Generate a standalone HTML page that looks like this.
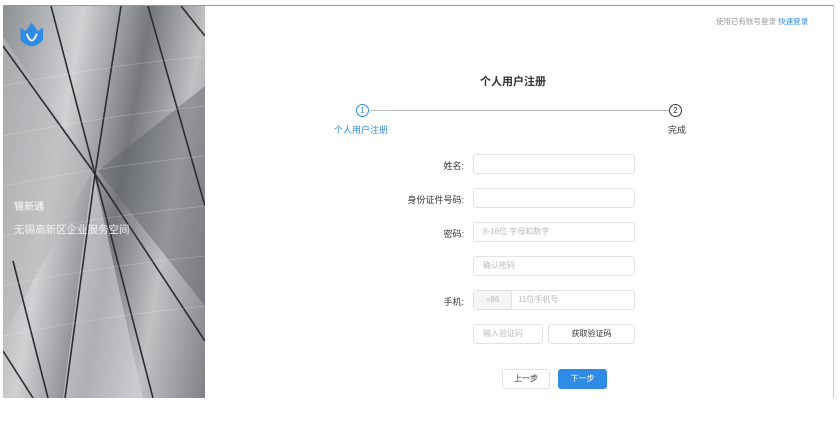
<!DOCTYPE html><html><head><meta charset="utf-8"><style>
body{margin:0;width:840px;height:438px;background:#fff;position:relative;font-family:"Liberation Sans","Noto Sans CJK SC",sans-serif;overflow:hidden}
.frame{position:absolute;left:3px;top:5px;width:831px;height:393px;border-top:1px solid #999;border-right:1px solid #ccc;box-sizing:border-box}
.left{position:absolute;left:3px;top:6px;width:202px;height:392px;overflow:hidden;background:linear-gradient(100deg,#8d9093 0%,#d0d1d3 30%,#75787b 55%,#c0c1c3 75%,#7f8285 100%)}
.abs{position:absolute}
.lbl{position:absolute;font-size:9px;color:#333;text-align:right;width:80px}
.inp{position:absolute;border:1px solid #e2e2e2;border-radius:3px;height:20px;box-sizing:border-box;font-size:8px;color:#bbb;padding-left:9px;line-height:18px;background:#fff}
</style></head><body>
<div class="frame"></div>
<div class="left">
<svg width="202" height="392" style="position:absolute;left:0;top:0">
<polygon points="0,30 90,165 0,330" fill="#b7b9bb" opacity=".6"/>
<polygon points="95,165 202,80 202,300" fill="#5e6164" opacity=".45"/>
<polygon points="90,165 60,392 140,392" fill="#d5d6d8" opacity=".6"/>
<g stroke="#2b2d30" stroke-width="1.6" fill="none">
<line x1="48" y1="0" x2="92" y2="168"/><line x1="118" y1="0" x2="92" y2="168"/>
<line x1="0" y1="40" x2="92" y2="168"/><line x1="145" y1="0" x2="202" y2="200"/>
<line x1="178" y1="0" x2="202" y2="30"/>
<line x1="92" y1="168" x2="202" y2="335"/><line x1="92" y1="168" x2="150" y2="392"/>
<line x1="92" y1="168" x2="62" y2="392"/><line x1="10" y1="255" x2="45" y2="392"/>
<line x1="0" y1="345" x2="30" y2="392"/>
</g>
<g stroke="#fff" stroke-opacity=".25" stroke-width=".8" fill="none">
<path d="M0,80 Q100,60 202,50"/><path d="M0,130 Q100,110 202,100"/><path d="M0,180 Q100,160 202,150"/><path d="M0,230 Q100,210 202,200"/><path d="M0,280 Q100,260 202,250"/><path d="M0,330 Q100,310 202,300"/>
</g>
<g transform="translate(15,14) scale(1.25)"><path d="M2,6 L6,9 L11,2 L16,9 L20,6 L20,16 Q11,26 2,16Z" fill="#2e8be6"/><path d="M7,11 Q11,22 15,11" stroke="#fff" stroke-width="1.5" fill="none"/></g>
</svg>
<div class="abs" style="left:11px;top:192px;color:#fff;font-size:10px">锡新通</div>
<div class="abs" style="left:11px;top:216px;color:#f2f2f2;font-size:10.5px">无锡高新区企业服务空间</div>
</div>
<div class="abs" style="left:716px;top:16px;font-size:7.5px;color:#999">使用已有账号登录 <span style="color:#2e8be6">快速登录</span></div>
<div class="abs" style="left:480px;top:73px;font-size:11px;color:#333;font-weight:bold">个人用户注册</div>
<div class="abs" style="left:356px;top:104px;width:13px;height:13px;border:1.3px solid #2e8be6;border-radius:50%;box-sizing:border-box;font-size:8px;color:#2e8be6;text-align:center;line-height:11px">1</div>
<div class="abs" style="left:370px;top:110px;width:299px;height:1px;background:#bbb"></div>
<div class="abs" style="left:669px;top:104px;width:13px;height:13px;border:1.3px solid #333;border-radius:50%;box-sizing:border-box;font-size:8px;color:#333;text-align:center;line-height:11px">2</div>
<div class="abs" style="left:334px;top:123px;font-size:9px;color:#2e8be6">个人用户注册</div>
<div class="abs" style="left:668px;top:123px;font-size:9px;color:#333">完成</div>
<div class="lbl" style="left:384px;top:159px">姓名:</div><div class="inp" style="left:473px;top:154px;width:162px"></div>
<div class="lbl" style="left:384px;top:193px">身份证件号码:</div><div class="inp" style="left:473px;top:188px;width:162px"></div>
<div class="lbl" style="left:384px;top:227px">密码:</div><div class="inp" style="left:473px;top:222px;width:162px">8-16位,字母和数字</div>
<div class="inp" style="left:473px;top:256px;width:162px">确认密码</div>
<div class="lbl" style="left:384px;top:295px">手机:</div>
<div class="inp" style="left:473px;top:290px;width:162px;padding-left:0"><span style="display:inline-block;width:37px;background:#f4f5f7;text-align:center;border-right:1px solid #e2e2e2">+86</span><span style="padding-left:6px">11位手机号</span></div>
<div class="inp" style="left:473px;top:324px;width:70px">输入验证码</div>
<div class="inp" style="left:548px;top:324px;width:87px;color:#333;text-align:center;padding:0">获取验证码</div>
<div class="inp" style="left:502px;top:369px;width:48px;color:#333;text-align:center;padding:0">上一步</div>
<div class="abs" style="left:558px;top:369px;width:49px;height:20px;background:#2e8be6;border-radius:3px;color:#fff;font-size:8px;text-align:center;line-height:20px">下一步</div>
</body></html>
